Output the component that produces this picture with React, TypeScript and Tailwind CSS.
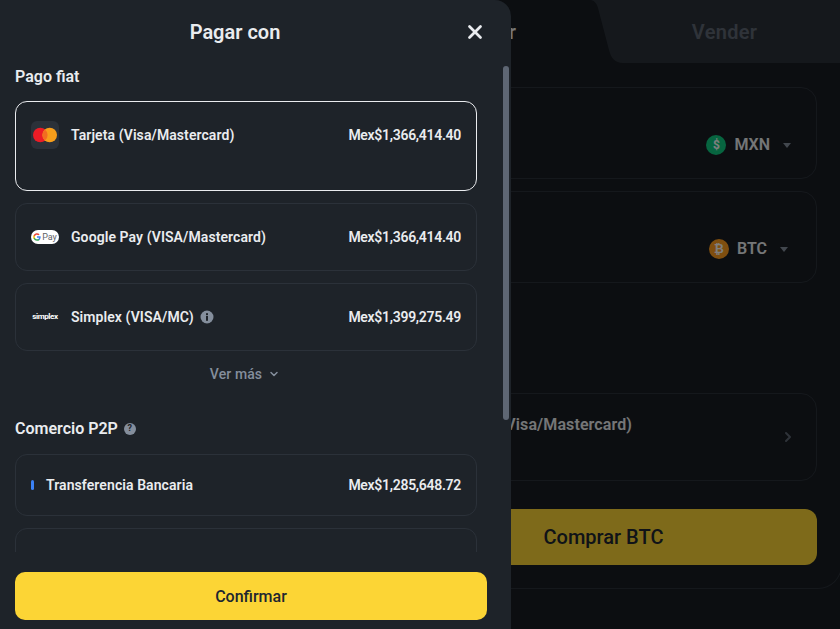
import { ReactNode } from 'react';
import { X, ChevronDown, ChevronRight } from 'lucide-react';

const font = { fontFamily: 'Roboto, "Liberation Sans", sans-serif' };

const MastercardIcon = () => (
  <div className="flex h-7 w-7 items-center justify-center rounded-md bg-[#2b3139]">
    <svg width="24" height="16" viewBox="0 0 24 16">
      <circle cx="7.300" cy="8" r="7.300" fill="#eb1c26" />
      <circle cx="16.700" cy="8" r="7.300" fill="#f79e1b" />
      <path d="M12 2.400a7.300 7.300 0 0 1 0 11.200a7.300 7.300 0 0 1 0-11.200z" fill="#f26d21" />
    </svg>
  </div>
);

const GooglePayIcon = () => (
  <div className="flex h-[14px] w-7 items-center justify-center gap-[1px] rounded-full bg-white">
    <svg width="8" height="8" viewBox="0 0 24 24">
      <path d="M23 12.300c0-.8-.1-1.600-.2-2.300H12v4.400h6.200a5.300 5.300 0 0 1-2.300 3.500v2.900h3.700c2.200-2 3.400-5 3.400-8.500z" fill="#4285f4" />
      <path d="M12 23.500c3.100 0 5.700-1 7.600-2.800l-3.700-2.900c-1 .7-2.300 1.100-3.900 1.100-3 0-5.500-2-6.400-4.700H1.800v3A11.500 11.500 0 0 0 12 23.500z" fill="#34a853" />
      <path d="M5.600 14.200a6.900 6.900 0 0 1 0-4.400v-3H1.800a11.500 11.500 0 0 0 0 10.400z" fill="#fbbc04" />
      <path d="M12 5.100c1.700 0 3.200.6 4.400 1.700l3.300-3.300A11.500 11.500 0 0 0 1.800 6.800l3.800 3c.9-2.700 3.400-4.700 6.400-4.700z" fill="#ea4335" />
    </svg>
    <span className="text-[9px] leading-none text-[#5f6368]">Pay</span>
  </div>
);

const SimplexIcon = () => (
  <div className="flex w-7 flex-col items-center leading-none">
    <span className="text-[8px] font-bold tracking-[-0.4px] text-white">simplex</span>
  </div>
);

const InfoDot = () => (
  <svg className="ml-[6px]" width="14" height="14" viewBox="0 0 14 14">
    <circle cx="7" cy="7" r="6.500" fill="#848e9c" />
    <rect x="6" y="6" width="2" height="4.800" fill="#1e2329" />
    <rect x="6" y="3.200" width="2" height="2" fill="#1e2329" />
  </svg>
);

const Price = ({ value }: { value: string }) => (
  <span className="flex h-7 items-center text-sm font-semibold tracking-[-0.3px] text-[#eaecef]">{value}</span>
);

const Row = ({ icon, name, price, extra, className }: { icon: ReactNode; name: string; price: string; extra?: ReactNode; className: string }) => (
  <div className={`flex items-start justify-between rounded-xl border px-[15px] ${className}`}>
    <div className="flex h-7 items-center">
      {icon}
      <span className="ml-3 text-sm font-semibold tracking-[0.08px] text-[#eaecef]">{name}</span>
      {extra}
    </div>
    <Price value={price} />
  </div>
);

// dimmed page that sits behind the modal
const TradeCard = () => (
  <div className="ml-[365px] flex h-[589px] w-[477px] flex-col rounded-b-3xl border-x border-b border-[#2b3139] bg-[#181c22]">
    <div className="relative flex h-[63px] shrink-0">
      <div className="flex w-[248px] items-center justify-center text-xl font-semibold text-[#eaecef]">Comprar</div>
      <svg className="absolute left-[225px] top-0" width="252" height="63" viewBox="0 0 252 63">
        <path d="M0 0H252V63H32C24 63 20 58 18 50L7 8C6 4 4 1 0 0z" fill="#2b3139" />
      </svg>
      <div className="relative ml-[20px] flex w-[260px] items-center justify-center text-xl font-semibold tracking-[0.3px] text-[#5e6673]">Vender</div>
    </div>
    <div className="flex flex-col px-6 pt-6">
      <div className="flex h-[92px] items-center justify-end rounded-2xl border border-[#2b3139] pr-[25px] pt-[24px]">
        <div className="flex h-5 w-5 items-center justify-center rounded-full bg-[#0ecb81] text-xs font-bold text-white">$</div>
        <span className="ml-[8px] text-base font-semibold text-[#eaecef]">MXN</span>
        <span className="ml-[13px] h-0 w-0 border-x-[4.500px] border-t-[5px] border-x-transparent border-t-[#848e9c]" />
      </div>
      <div className="mt-3 flex h-[92px] items-center justify-end rounded-2xl border border-[#2b3139] pr-[28px] pt-[24px]">
        <div className="flex h-5 w-5 items-center justify-center rounded-full bg-[#ff9d1f] text-xs font-bold text-white">₿</div>
        <span className="ml-[8px] text-base font-semibold text-[#eaecef]">BTC</span>
        <span className="ml-[13px] h-0 w-0 border-x-[4.500px] border-t-[5px] border-x-transparent border-t-[#848e9c]" />
      </div>
      <div className="mt-[110px] flex h-[88px] justify-between rounded-2xl border border-[#2b3139] pl-[54px] pr-[20px] pt-[19px]">
        <span className="text-base font-semibold tracking-[0.1px] text-[#eaecef]">Tarjeta (Visa/Mastercard)</span>
        <ChevronRight className="mt-[16px] h-4 w-4 text-[#5e6673]" strokeWidth={3} />
      </div>
      <button className="mt-7 h-14 rounded-xl bg-[#fcd535] text-xl font-medium text-[#202630]">Comprar BTC</button>
    </div>
  </div>
);

const App = () => {
  return (
    <div className="relative h-[629px] w-[840px] overflow-hidden bg-[#181c22]" style={font}>
      <TradeCard />
      <div className="absolute inset-0 bg-black/50" />

      {/* Modal */}
      <div className="absolute left-0 top-0 flex h-full w-[511px] flex-col rounded-tr-2xl bg-[#1e2329]">
        <div className="relative flex h-[65px] shrink-0 items-center pb-[1px] pr-[41px]">
          <h1 className="w-full text-center text-xl font-semibold text-[#eaecef]">Pagar con</h1>
          <X className="absolute left-[464px] top-[21px] h-[22px] w-[22px] text-[#eaecef]" strokeWidth={3} />
        </div>

        <div className="relative h-[487px] shrink-0 overflow-hidden">
          <div className="absolute left-[503px] top-[1px] h-[354px] w-[6px] rounded-full bg-[#5e6673]" />
          <div className="w-[492px] px-[15px]">
            <h2 className="flex h-6 items-center text-base font-semibold text-[#eaecef]">Pago fiat</h2>
            <div className="mt-3 flex flex-col gap-3">
              <Row className="h-[90px] border-[#eaecef] pt-[19px]" icon={<MastercardIcon />} name="Tarjeta (Visa/Mastercard)" price="Mex$1,366,414.40" />
              <Row className="h-[68px] border-[#2b3139] pt-[19px]" icon={<GooglePayIcon />} name="Google Pay (VISA/Mastercard)" price="Mex$1,366,414.40" />
              <Row
                className="h-[68px] border-[#2b3139] pt-[19px]"
                icon={<SimplexIcon />}
                name="Simplex (VISA/MC)"
                price="Mex$1,399,275.49"
                extra={<InfoDot />}
              />
            </div>
            <div className="mt-[13px] flex items-center justify-center gap-[6px] pr-[2px] text-sm font-medium tracking-[0.1px] text-[#848e9c]">
              Ver más <ChevronDown className="h-3 w-3" strokeWidth={3} />
            </div>
            <h2 className="mt-[33px] flex h-6 items-center text-base font-semibold text-[#eaecef]">
              Comercio P2P
              <span className="ml-[6px] flex h-3 w-3 items-center justify-center rounded-full bg-[#848e9c] text-[9px] font-bold text-[#1e2329]">?</span>
            </h2>
            <div className="mt-[13px] flex flex-col gap-3">
              <div className="flex h-[62px] items-center justify-between rounded-xl border border-[#2b3139] px-[15px]">
                <div className="flex items-center">
                  <span className="h-[10px] w-[3px] rounded-full bg-[#3b82f6]" />
                  <span className="ml-3 text-sm font-semibold tracking-[0.08px] text-[#eaecef]">Transferencia Bancaria</span>
                </div>
                <Price value="Mex$1,285,648.72" />
              </div>
              <div className="h-[62px] rounded-xl border border-[#2b3139]" />
            </div>
          </div>
        </div>

        <div className="mt-5 pl-[15px]">
          <button className="h-12 w-[472px] rounded-[10px] bg-[#fcd535] pt-[1px] text-base font-medium text-[#202630]">Confirmar</button>
        </div>
      </div>
    </div>
  );
};

export default App;
